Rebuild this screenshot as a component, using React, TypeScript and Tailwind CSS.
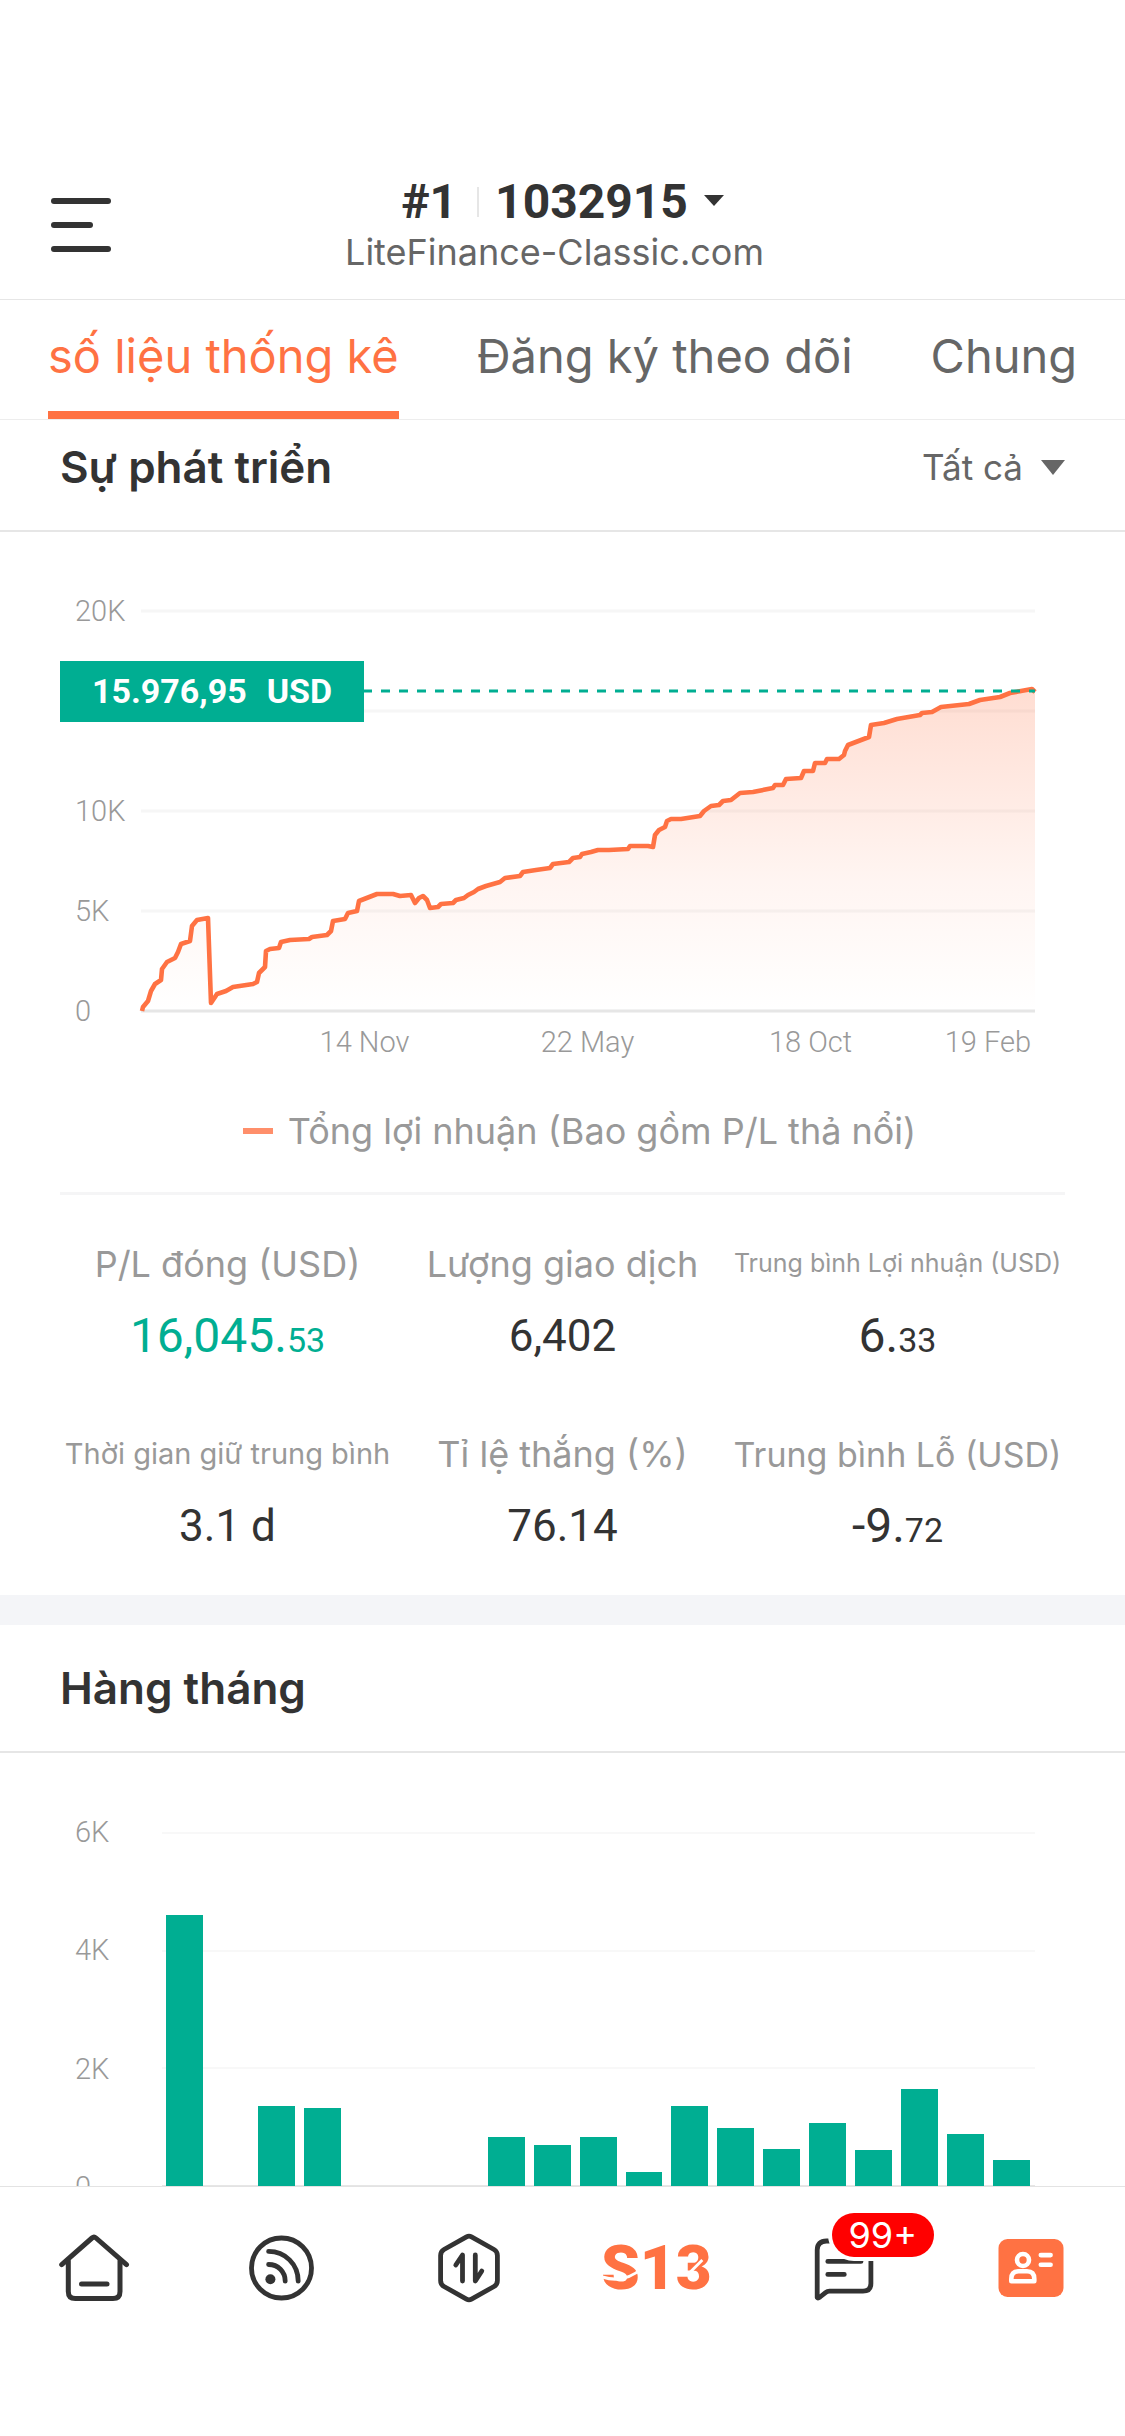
import React, { useState } from "react";

type Point = [number, number];

const GROWTH: Point[] = [
  [1, 400], [2, 396], [7, 390], [10, 380], [14, 373], [20, 369], [21, 358], [26, 351], [34, 347], [37, 341],
  [40, 333], [49, 330], [51, 315], [56, 309], [67, 307], [70, 392], [76, 383], [85, 380], [92, 376], [112, 373],
  [116, 371], [118, 362], [124, 356], [125, 340], [129, 338], [138, 337], [140, 331], [149, 329], [168, 328],
  [171, 326], [186, 324], [190, 320], [192, 310], [204, 308], [207, 302], [216, 300], [218, 290], [236, 283],
  [252, 283], [259, 285], [270, 284], [274, 292], [278, 287], [282, 285], [286, 289], [289, 297], [297, 296],
  [300, 293], [312, 292], [315, 289], [323, 287], [327, 284], [333, 281], [337, 278], [345, 275], [359, 271],
  [364, 267], [379, 265], [382, 261], [395, 259], [409, 257], [412, 253], [428, 251], [432, 247], [439, 246],
  [441, 243], [450, 241], [457, 239], [468, 239], [487, 238], [489, 235], [507, 235], [512, 236], [514, 224],
  [518, 219], [524, 216], [526, 210], [530, 208], [540, 208], [559, 205], [563, 200], [570, 195], [578, 194],
  [582, 190], [590, 189], [599, 182], [612, 181], [632, 177], [634, 174], [642, 174], [645, 168], [660, 167],
  [663, 160], [672, 160], [674, 152], [684, 152], [686, 148], [698, 148], [703, 144], [704, 140], [707, 134],
  [728, 126], [730, 114], [743, 112], [756, 108], [779, 104], [781, 102], [791, 101], [800, 96], [828, 93],
  [839, 89], [859, 86], [869, 82], [880, 80], [891, 78], [894, 81],
];

const LINE = "M" + GROWTH.map(([x, y]) => `${x} ${y}`).join("L");
const AREA = `${LINE}V400H0Z`;

/* Monthly profit in USD; months at zero show no bar. */
const MONTHLY = [4590, 0, 1370, 1335, 0, 0, 0, 850, 710, 845, 255, 1370, 1000, 650, 1090, 620, 1665, 900, 450];

const TABS = ["số liệu thống kê", "Đăng ký theo dõi", "Chung"];

function Header() {
  return (
    <header className="flex h-[300px] shrink-0 items-start border-b border-[#e6e6e6] bg-white px-[51px] pt-[176px]">
      <button type="button" aria-label="Menu" className="mt-[22px] flex h-[54px] w-[60px] flex-col justify-between">
        <span className="h-[6px] w-[60px] rounded-full bg-[#333]" />
        <span className="h-[6px] w-[42px] rounded-full bg-[#333]" />
        <span className="h-[6px] w-[60px] rounded-full bg-[#333]" />
      </button>
      <div className="flex flex-1 flex-col items-center pr-[60px]">
        <button
          type="button"
          aria-haspopup="listbox"
          className="flex h-[52px] items-center font-[Roboto,sans-serif] text-5xl font-bold text-[#333]"
        >
          <span>#1</span>
          <span className="ml-5 mr-4 h-[30px] w-[2px] bg-[#e6e6e6]" />
          <span>1032915</span>
          <svg width="20" height="11" viewBox="0 0 20 11" className="mb-1 ml-4" aria-hidden="true">
            <path d="M0 0H20L10 11Z" fill="#333" />
          </svg>
        </button>
        <p className="pr-4 text-[36px] leading-[48px] text-[#666]">LiteFinance-Classic.com</p>
      </div>
    </header>
  );
}

function TabBar() {
  const [active, setActive] = useState(0);
  return (
    <div role="tablist" className="flex h-[120px] shrink-0 items-stretch gap-[78px] border-b border-[#ededed] bg-white px-12">
      {TABS.map((tab, i) => (
        <button
          key={tab}
          type="button"
          role="tab"
          aria-selected={active === i}
          onClick={() => setActive(i)}
          className={
            active === i
              ? "whitespace-nowrap border-b-8 border-[#ff7243] text-[47px] leading-none text-[#ff7243]"
              : "whitespace-nowrap border-b-8 border-transparent text-[47px] leading-none text-[#666]"
          }
        >
          {tab}
        </button>
      ))}
    </div>
  );
}

function GrowthChart() {
  return (
    <div className="relative pl-[75px] pr-[90px] pt-[59px]">
      <div className="flex h-[400px]">
        <div className="-my-[20px] flex w-[66px] flex-col justify-between font-[Roboto,sans-serif] text-[29px] font-light leading-[40px] text-[#999]">
          <span>20K</span>
          <span>&nbsp;</span>
          <span>10K</span>
          <span>5K</span>
          <span>0</span>
        </div>
        <svg
          viewBox="0 0 894 400"
          preserveAspectRatio="none"
          className="h-full min-w-0 flex-1 overflow-visible"
          role="img"
          aria-label="Tổng lợi nhuận"
        >
          <defs>
            <linearGradient id="profit" x1="0" y1="78" x2="0" y2="400" gradientUnits="userSpaceOnUse">
              <stop offset="0" stopColor="#ff7243" stopOpacity="0.24" />
              <stop offset="0.6" stopColor="#ff7243" stopOpacity="0.07" />
              <stop offset="1" stopColor="#ff7243" stopOpacity="0" />
            </linearGradient>
          </defs>
          <path d="M0 0H894M0 100H894M0 200H894M0 300H894" stroke="#f6f6f6" strokeWidth="3" />
          <path d="M0 400H894" stroke="#e6e6e6" strokeWidth="3" />
          <path d={AREA} fill="url(#profit)" />
          <path d={LINE} fill="none" stroke="#ff7243" strokeWidth="4.6" strokeLinejoin="round" />
          <path d="M222 80H894" stroke="#00ae92" strokeWidth="3" strokeDasharray="9 9" />
        </svg>
      </div>
      <div className="absolute left-[60px] top-[109px] flex h-[61px] w-[304px] items-center justify-center gap-5 bg-[#00ae92] font-[Roboto,sans-serif] text-[34px] font-bold text-white">
        <span>15.976,95</span>
        <span>USD</span>
      </div>
    </div>
  );
}

const LABEL_SIZE = {
  sm: "text-[25px]",
  md: "text-[29px]",
  lg: "text-[34px]",
  xl: "text-[36px]",
};

function Stat({ label, size, children, green = false }: {
  label: string;
  size: keyof typeof LABEL_SIZE;
  children: React.ReactNode;
  green?: boolean;
}) {
  return (
    <div className="flex flex-col items-center">
      <dt className={`flex h-12 items-center whitespace-nowrap text-[#999] ${LABEL_SIZE[size]}`}>{label}</dt>
      <dd
        className={`mt-5 flex h-14 items-center font-[Roboto,sans-serif] text-[44px] ${green ? "text-[#00ae92]" : "text-[#333]"}`}
      >
        {children}
      </dd>
    </div>
  );
}

function Split({ whole, cents }: { whole: string; cents: string }) {
  return (
    <span className="text-5xl">
      {whole}
      <span className="text-[34px]">{cents}</span>
    </span>
  );
}

function MonthlyChart() {
  return (
    <div className="relative ml-[75px] mr-[90px] mt-[79px] flex h-[355px]">
      <div className="-my-[20px] flex w-[87px] flex-col justify-between font-[Roboto,sans-serif] text-[29px] font-light leading-[40px] text-[#999]">
        <span>6K</span>
        <span>4K</span>
        <span>2K</span>
        <span>0</span>
      </div>
      <div className="relative flex-1">
        <div className="absolute inset-0 flex flex-col justify-between">
          <div className="h-[2px] bg-[#f8f8f8]" />
          <div className="h-[2px] bg-[#f8f8f8]" />
          <div className="h-[2px] bg-[#f8f8f8]" />
          <div className="h-[2px] bg-[#e6e6e6]" />
        </div>
        <div className="relative flex h-full items-end">
          {MONTHLY.map((v, i) => (
            <div key={i} className="flex h-full flex-1 items-end pl-[4px] pr-[5px]">
              <div className="w-full bg-[#00ae92]" style={{ height: `${(v / 6000) * 100}%` }} />
            </div>
          ))}
        </div>
      </div>
    </div>
  );
}

function HomeIcon() {
  return (
    <svg width="72" height="72" viewBox="0 0 72 72" fill="none" stroke="#333" strokeWidth="5" strokeLinecap="round" strokeLinejoin="round" aria-hidden="true">
      <path d="M3.7 32.7L34 6Q36 4.2 38 6L68.5 32.7" />
      <path d="M10.3 29V59.5Q10.3 66.6 17.3 66.6H55Q62 66.6 62 59.5V29" />
      <path d="M23.5 52H49" />
    </svg>
  );
}

function SignalIcon() {
  return (
    <svg width="72" height="72" viewBox="0 0 72 72" fill="none" stroke="#333" strokeWidth="4.8" strokeLinecap="round" aria-hidden="true">
      <circle cx="36.5" cy="36" r="30" />
      <path d="M23.6 19.4C40 19.4 53.2 32 53.2 49.2" />
      <path d="M23.6 32.5C33 32.5 40.2 39.7 40.2 49.2" />
      <circle cx="25.4" cy="47.3" r="5" fill="#333" stroke="none" />
    </svg>
  );
}

function TradeIcon() {
  return (
    <svg width="72" height="72" viewBox="0 0 72 72" fill="none" stroke="#333" strokeWidth="4.8" strokeLinecap="round" strokeLinejoin="round" aria-hidden="true">
      <path d="M33.5 4.8Q36 3.4 38.5 4.8L61 17.5Q64.4 19.5 64.4 23.5V48.5Q64.4 52.5 61 54.5L38.5 67.2Q36 68.6 33.5 67.2L11 54.5Q7.6 52.5 7.6 48.5V23.5Q7.6 19.5 11 17.5Z" />
      <path d="M22.8 33L29.5 23V49" />
      <path d="M42.3 23V49L48.8 39" />
    </svg>
  );
}

function BrandMark() {
  return (
    <span className="relative font-[Roboto,sans-serif] text-[62px] font-black leading-[72px] text-[#ff7243]">
      S13
      <svg viewBox="0 0 108 72" className="absolute inset-0 h-full w-full" fill="none" stroke="#fff" strokeWidth="3" aria-hidden="true">
        <path d="M0 45Q22 52 40 36" />
        <path d="M86 42L100 28" />
      </svg>
    </span>
  );
}

function ChatIcon() {
  return (
    <svg width="72" height="72" viewBox="0 0 72 72" fill="none" stroke="#333" strokeWidth="4.8" strokeLinecap="round" strokeLinejoin="round" aria-hidden="true">
      <path d="M54 9H18.5Q9.2 9 9.2 18V65.5Q10 66.5 12 65L17.5 60.6Q19.3 59.2 21.5 59.2H55Q62.9 59.2 62.9 51.5V20" />
      <path d="M19.8 29.4H53M19.8 42.4H36.3" />
    </svg>
  );
}

function ProfileIcon() {
  return (
    <svg width="72" height="72" viewBox="0 0 72 72" fill="none" aria-hidden="true">
      <rect x="3.5" y="7" width="65" height="58" rx="9" fill="#ff7243" />
      <g stroke="#fff" strokeWidth="4.6" strokeLinecap="round" strokeLinejoin="round">
        <circle cx="28" cy="28" r="6" />
        <path d="M16.3 49.3H39.3V47Q39.3 39.3 32 39.3H23.6Q16.3 39.3 16.3 47Z" />
        <path d="M45.8 23.1H55.6M45.8 32.7H55.6" />
      </g>
    </svg>
  );
}

function BottomNav() {
  const item = "relative flex h-[72px] items-center justify-center";
  return (
    <nav className="grid h-[250px] shrink-0 grid-cols-6 border-t border-[#e3e3e3] bg-white pt-[45px]">
      <a href="#home" aria-label="Trang chủ" className={item}><HomeIcon /></a>
      <a href="#signals" aria-label="Tín hiệu" className={item}><SignalIcon /></a>
      <a href="#trade" aria-label="Giao dịch" className={item}><TradeIcon /></a>
      <a href="#s13" className={item}><BrandMark /></a>
      <a href="#messages" aria-label="Tin nhắn, 99+" className={item}>
        <ChatIcon />
        <span className="absolute -top-[19px] left-1/2 -ml-[12px] flex h-[44px] w-[102px] items-center justify-center rounded-full bg-[#ff0000] text-[36px] text-white ring-4 ring-white">
          99+
        </span>
      </a>
      <a href="#account" aria-label="Tài khoản" aria-current="page" className={item}><ProfileIcon /></a>
    </nav>
  );
}

export default function App() {
  return (
    <div className="flex h-screen flex-col bg-white font-[Inter,sans-serif] text-[#333]">
      <Header />
      <TabBar />
      <main className="min-h-0 flex-1 overflow-y-auto [scrollbar-width:none]">
        <section>
          <div className="flex h-[112px] items-center justify-between border-b-2 border-[#e6e6e6] px-[60px] pb-4">
            <h2 className="text-[44px] font-semibold">Sự phát triển</h2>
            <label className="relative flex items-center text-[#666]">
              <select
                aria-label="Khoảng thời gian"
                className="appearance-none bg-transparent pr-[42px] text-[35px] text-[#666] outline-none"
              >
                <option>Tất cả</option>
              </select>
              <svg width="24" height="15" viewBox="0 0 24 15" className="pointer-events-none absolute right-0" aria-hidden="true">
                <path d="M0 0H24L12 15Z" fill="#666" />
              </svg>
            </label>
          </div>
          <div className="pt-5">
            <GrowthChart />
            <div className="flex pl-[253px] pr-[94px] pt-[11px] font-[Roboto,sans-serif] text-[29px] font-light leading-[40px] text-[#999]">
              <span className="w-[223px] text-center">14 Nov</span>
              <span className="w-[223px] text-center">22 May</span>
              <span className="w-[223px] text-center">18 Oct</span>
              <span className="flex-1 whitespace-nowrap text-right">19 Feb</span>
            </div>
          </div>
          <div className="mt-[45px] flex items-center justify-center gap-[15px] pl-[34px] text-[36px] leading-[48px] text-[#999]">
            <span className="h-[6px] w-[30px] bg-[#ff8f6b]" />
            <span>Tổng lợi nhuận (Bao gồm P/L thả nổi)</span>
          </div>
          <dl className="mx-[60px] mt-[37px] grid grid-cols-3 gap-y-[66px] border-t-[3px] border-[#f5f5f6] pb-[41px] pt-[45px]">
            <Stat label="P/L đóng (USD)" size="xl" green><Split whole="16,045." cents="53" /></Stat>
            <Stat label="Lượng giao dịch" size="xl">6,402</Stat>
            <Stat label="Trung bình Lợi nhuận (USD)" size="sm"><Split whole="6." cents="33" /></Stat>
            <Stat label="Thời gian giữ trung bình" size="md">3.1 d</Stat>
            <Stat label="Tỉ lệ thắng (%)" size="xl">76.14</Stat>
            <Stat label="Trung bình Lỗ (USD)" size="lg"><Split whole="-9." cents="72" /></Stat>
          </dl>
        </section>
        <section className="border-t-[30px] border-[#f4f5f8]">
          <div className="flex h-[128px] items-center border-b-2 border-[#e6e6e6] px-[60px]">
            <h2 className="text-[44px] font-semibold">Hàng tháng</h2>
          </div>
          <MonthlyChart />
        </section>
      </main>
      <BottomNav />
    </div>
  );
}
